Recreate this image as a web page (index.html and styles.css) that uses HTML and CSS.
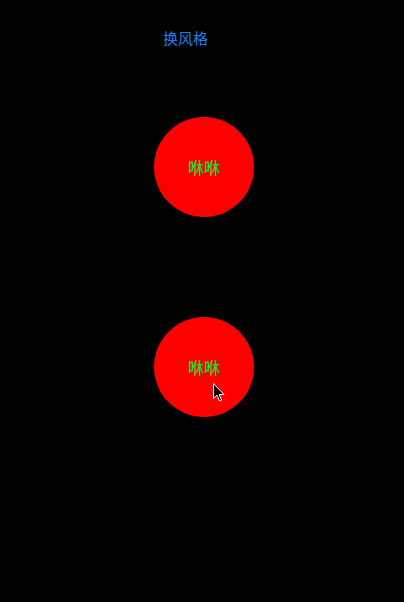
FILE: index.html
```html
<!DOCTYPE html>
<html lang="zh">
<head>
<meta charset="utf-8">
<link rel="stylesheet" href="styles.css">
</head>
<body>
<div class="page">
  <div class="header"><span class="switch">换风格</span></div>
  <div class="circles">
    <div class="circle"><span class="label">咻咻</span></div>
    <div class="circle"><span class="label">咻咻</span></div>
  </div>
  <svg class="cursor" width="12" height="19" viewBox="0 0 12 19">
    <path d="M0.5 0.5 L0.5 15.5 L4 12.2 L6.5 18 L8.6 17.1 L6.2 11.5 L11 11.5 Z" fill="#000" stroke="#fff" stroke-width="1"/>
  </svg>
</div>
</body>
</html>
```
FILE: styles.css
```css
html, body {
  margin: 0;
  padding: 0;
  background: #000;
}
.page {
  position: relative;
  width: 404px;
  height: 602px;
  background: #000;
  font-family: "Noto Sans CJK SC", sans-serif;
}
.header {
  padding: 25px 0 0 163px;
  height: 24px;
}
.switch {
  color: #1a80f0;
  font-size: 15px;
  line-height: 20px;
}
.circles {
  display: flex;
  flex-direction: column;
  align-items: center;
  gap: 100px;
  padding: 68px 0 0 4px;
}
.circle {
  width: 100px;
  height: 100px;
  border-radius: 50%;
  background: #ff0000;
  display: flex;
  align-items: center;
  justify-content: center;
}
.label {
  color: #22dd22;
  font-size: 16px;
  line-height: 20px;
  font-weight: 500;
  margin-top: -1px;
}
.cursor {
  position: absolute;
  left: 213px;
  top: 383px;
}
```
